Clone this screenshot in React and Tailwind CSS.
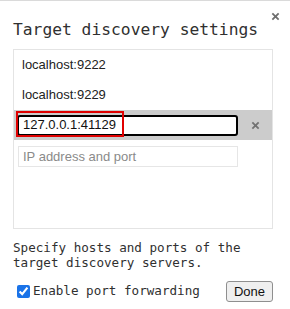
import React from 'react';

const mono = { fontFamily: '"DejaVu Sans Mono", monospace' };

const CloseIcon = ({ className }) => (
  <svg viewBox="0 0 10 10" className={className}>
    <path d="M1.5 1.5 L8.5 8.5 M8.5 1.5 L1.5 8.5" stroke="currentColor" strokeWidth="2" />
  </svg>
);

const App = () => {
  return (
    <div className="w-[290px] h-[309px] bg-white border-t border-[#dadada] relative overflow-hidden" style={{ fontFamily: '"Liberation Sans", Arial, sans-serif' }}>
      {/* dialog close */}
      <button className="absolute right-[10px] top-[11px] text-[#6e6e6e]">
        <CloseIcon className="w-[9px] h-[9px]" />
      </button>

      <div className="pl-[13px] pr-[17px] pt-[19px]">
        <h2 className="text-[16.3px] leading-[20px] text-[#303030]" style={mono}>
          Target discovery settings
        </h2>

        {/* host list */}
        <div className="mt-[9px] h-[180px] border border-[#e4e4e4] flex flex-col">
          <div className="h-[30px] flex items-center pl-[8px] text-[13px] text-[#222]">localhost:9222</div>
          <div className="h-[30px] flex items-center pl-[8px] text-[13px] text-[#222]">localhost:9229</div>
          <div className="h-[30px] bg-[#cccccc] flex items-center pl-[3px] pr-[12px] relative">
            <div className="w-[221px] h-[21px] border-2 border-black rounded-[3px] bg-white flex items-center pl-[4px] text-[13px] text-[#111]">
              127.0.0.1:41129
            </div>
            <div className="flex-1 flex justify-end">
              <CloseIcon className="w-[9px] h-[9px] text-[#727272]" />
            </div>
            <div className="absolute left-[2px] top-[1px] w-[108px] h-[26px] border-2 border-[#e00000] pointer-events-none" />
          </div>
          <div className="pl-[4px] pt-[4px]">
            <input
              placeholder="IP address and port"
              className="w-[220px] h-[21px] border border-[#e6e6e6] pl-[4px] text-[13px] placeholder:text-[#8a8a8a] outline-none"
            />
          </div>
        </div>

        <p className="mt-[11px] text-[12.6px] leading-[15px] text-[#303030]" style={mono}>
          Specify hosts and ports of the target discovery servers.
        </p>

        <div className="mt-[11px] flex items-center justify-between">
          <label className="flex items-center text-[12.6px] text-[#303030]" style={mono}>
            <input type="checkbox" defaultChecked className="w-[13px] h-[13px] ml-[4px] mr-[3px] accent-[#1a73e8]" />
            Enable port forwarding
          </label>
          <button className="w-[47px] h-[21px] border border-[#8f8f8f] rounded-[3px] bg-[#efefef] text-[13px] text-[#111] font-medium">
            Done
          </button>
        </div>
      </div>
    </div>
  );
};

export default App;
